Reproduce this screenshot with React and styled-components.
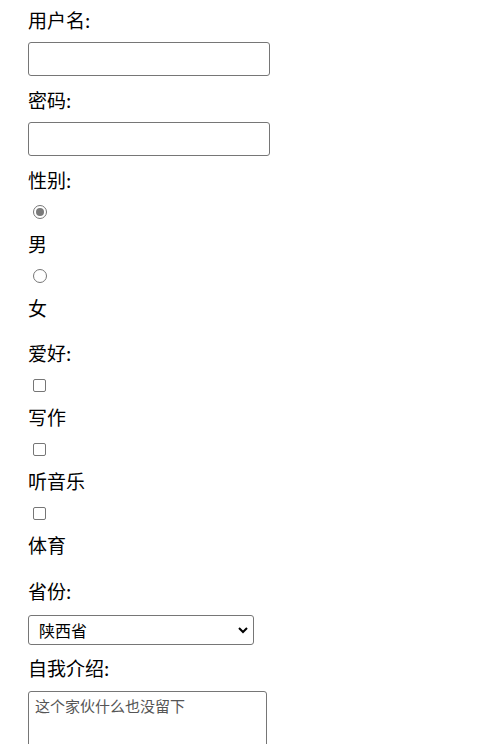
import React from "react";
import styled, { createGlobalStyle } from "styled-components";

const GlobalStyle = createGlobalStyle`
  body {
    margin: 0;
    background: #fff;
    color: #000;
    font-family: "Noto Sans CJK SC", "Noto Sans", sans-serif;
  }
`;

const Form = styled.form`
  padding: 4px 0 0 28px;
  display: flex;
  flex-direction: column;
  align-items: flex-start;
`;

const Label = styled.div`
  font-size: 19px;
  line-height: 32px;
  height: 32px;
  margin-top: ${(props) => props.$top || 0}px;
`;

const TextInput = styled.input`
  box-sizing: border-box;
  width: 242px;
  height: 34px;
  margin: 6px 0 8px;
  border: 1px solid #767676;
  border-radius: 3px;
  background: #fff;
  font-size: 16px;
  padding: 0 6px;
`;

const Row = styled.label`
  height: 32px;
  display: flex;
  align-items: center;
  padding-left: ${(props) => props.$pad || 5}px;
`;

const Radio = styled.input.attrs({ type: "radio" })`
  appearance: none;
  margin: 0;
  width: 14px;
  height: 14px;
  border: 1px solid #767676;
  border-radius: 50%;
  box-sizing: border-box;
  background: #fff;
  display: grid;
  place-items: center;
  &:checked::after {
    content: "";
    width: 8px;
    height: 8px;
    border-radius: 50%;
    background: #7a7a7a;
  }
`;

const Check = styled.input.attrs({ type: "checkbox" })`
  appearance: none;
  margin: 0;
  width: 13px;
  height: 13px;
  border: 1px solid #767676;
  border-radius: 2px;
  box-sizing: border-box;
  background: #fff;
`;

const SelectBox = styled.div`
  position: relative;
  margin: 8px 0 7px;
`;

const Select = styled.select`
  appearance: none;
  box-sizing: border-box;
  width: 226px;
  height: 30px;
  border: 1px solid #767676;
  border-radius: 3px;
  background: #fff;
  font-family: "Noto Sans CJK SC", sans-serif;
  font-size: 16px;
  color: #000;
  padding: 0 0 0 10px;
`;

const Chevron = styled.svg`
  position: absolute;
  right: 5px;
  top: 10px;
  pointer-events: none;
`;

const TextArea = styled.textarea`
  box-sizing: border-box;
  width: 239px;
  height: 80px;
  margin-top: 7px;
  border: 1px solid #767676;
  border-radius: 3px;
  padding: 4px 6px;
  font-family: "Noto Sans CJK SC", sans-serif;
  font-size: 15px;
  line-height: 20px;
  color: #555;
  resize: none;
`;

export default function App() {
  return (
    <>
      <GlobalStyle />
      <Form>
        <Label>用户名:</Label>
        <TextInput type="text" />
        <Label>密码:</Label>
        <TextInput type="password" />
        <Label>性别:</Label>
        <Row>
          <Radio name="sex" defaultChecked />
        </Row>
        <Label>男</Label>
        <Row>
          <Radio name="sex" />
        </Row>
        <Label>女</Label>
        <Label $top={13}>爱好:</Label>
        <Row>
          <Check />
        </Row>
        <Label>写作</Label>
        <Row>
          <Check />
        </Row>
        <Label>听音乐</Label>
        <Row>
          <Check />
        </Row>
        <Label>体育</Label>
        <Label $top={14}>省份:</Label>
        <SelectBox>
          <Select defaultValue="陕西省">
            <option>陕西省</option>
            <option>北京市</option>
            <option>上海市</option>
          </Select>
          <Chevron width="12" height="10" viewBox="0 0 12 10">
            <path d="M2 3 L6 7 L10 3" fill="none" stroke="#000" strokeWidth="2" />
          </Chevron>
        </SelectBox>
        <Label>自我介绍:</Label>
        <TextArea defaultValue="这个家伙什么也没留下" />
      </Form>
    </>
  );
}
